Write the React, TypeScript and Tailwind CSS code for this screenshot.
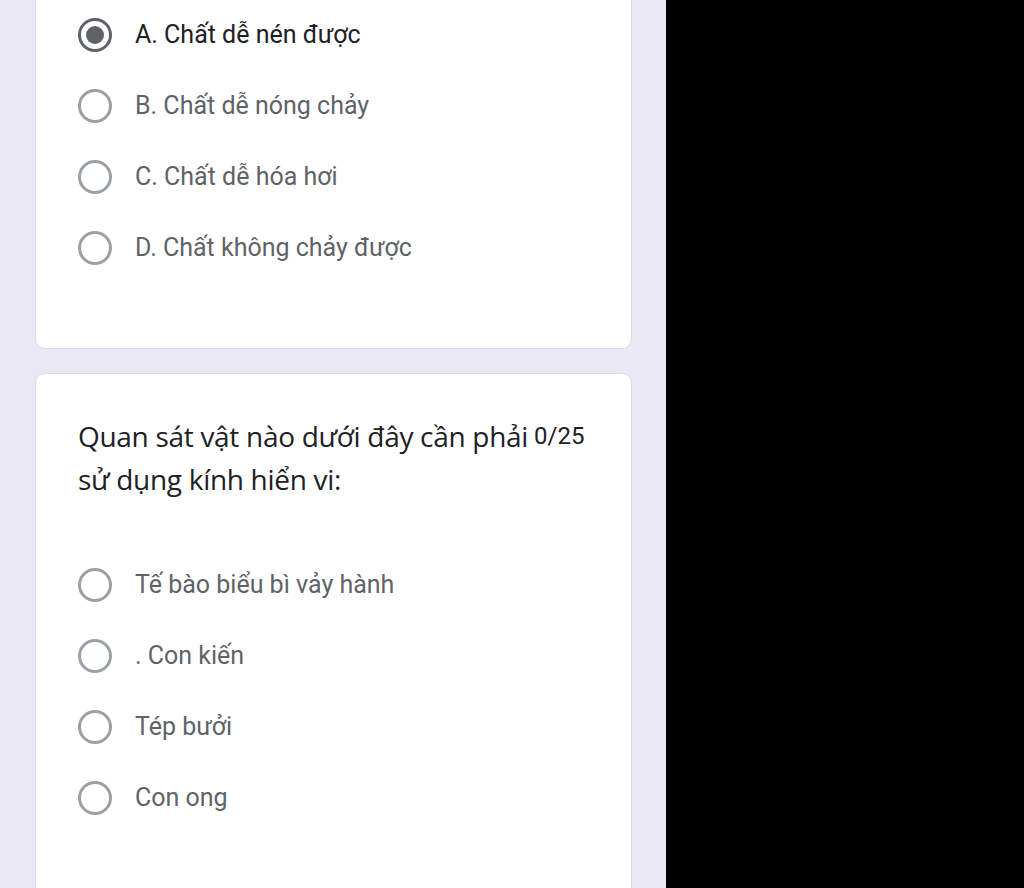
import React from "react";

type Option = { label: string; checked?: boolean };

const firstOptions: Option[] = [
  { label: "A. Chất dễ nén được", checked: true },
  { label: "B. Chất dễ nóng chảy" },
  { label: "C. Chất dễ hóa hơi" },
  { label: "D. Chất không chảy được" },
];

const secondOptions: Option[] = [
  { label: "Tế bào biểu bì vảy hành" },
  { label: ". Con kiến" },
  { label: "Tép bưởi" },
  { label: "Con ong" },
];

const Radio: React.FC<{ checked?: boolean }> = ({ checked }) => (
  <span
    className={`flex h-[34px] w-[34px] shrink-0 items-center justify-center rounded-full border-[3px] ${
      checked ? "border-[#5f6368]" : "border-[#9aa0a6]"
    }`}
  >
    {checked && <span className="h-[18px] w-[18px] rounded-full bg-[#5f6368]" />}
  </span>
);

const OptionRow: React.FC<{ option: Option }> = ({ option }) => (
  <div className="flex h-[71px] items-center">
    <Radio checked={option.checked} />
    <span
      className={`ml-[23px] text-[25px] leading-none ${
        option.checked ? "text-[#202124]" : "text-[#5f6368]"
      }`}
    >
      {option.label}
    </span>
  </div>
);

export default function App() {
  return (
    <div className="flex h-[888px] w-[1024px] overflow-hidden bg-black font-['Roboto','Noto_Sans',sans-serif]">
      <div className="w-[666px] shrink-0 bg-[#ebe8f6] px-[35px]">
        {/* Previous question card */}
        <div className="-mt-[22px] w-[597px] rounded-[10px] border border-[#dadce0] bg-white pl-[42px] pt-[20px] pb-[65px]">
          {firstOptions.map((o) => (
            <OptionRow key={o.label} option={o} />
          ))}
        </div>

        {/* Current question card */}
        <div className="mt-[24px] w-[597px] rounded-[10px] border border-[#dadce0] bg-white pl-[42px] pr-[43px] pt-[41px] pb-[120px]">
          <div className="flex items-start">
            <p className="font-['Open_Sans','Roboto',sans-serif] text-[28px] leading-[43px] tracking-[-0.3px] text-[#202124]">
              Quan sát vật nào dưới đây cần phải
              <br />
              sử dụng kính hiển vi:
            </p>
            <span className="ml-[6px] mt-[9px] shrink-0 text-[24px] leading-none text-[#202124]">0/25</span>
          </div>
          <div className="mt-[48px]">
            {secondOptions.map((o) => (
              <OptionRow key={o.label} option={o} />
            ))}
          </div>
        </div>
      </div>
    </div>
  );
}
